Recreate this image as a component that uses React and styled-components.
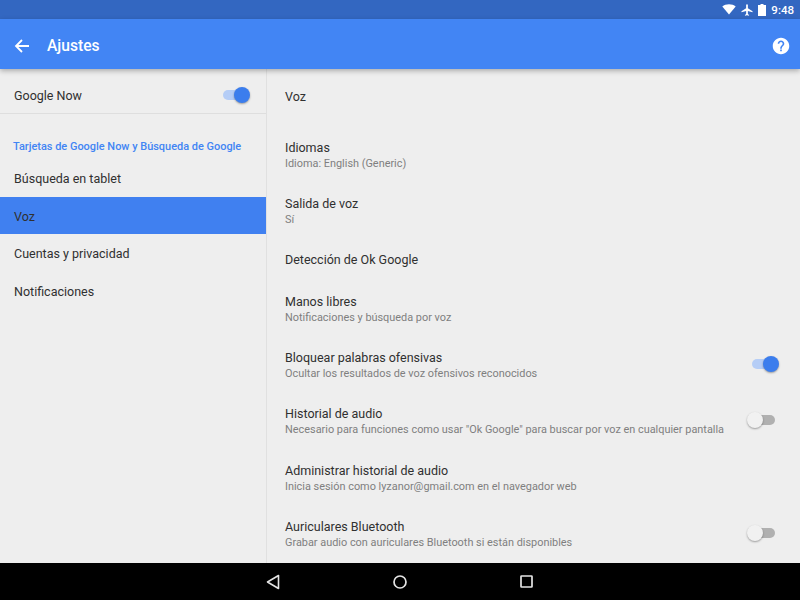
import React from 'react';
import styled, { createGlobalStyle } from 'styled-components';

const GlobalStyle = createGlobalStyle`
  html, body { margin: 0; padding: 0; height: 100%; }
  body { font-family: Roboto, "Liberation Sans", sans-serif; background: #eeeeee; overflow: hidden; }
`;

const Screen = styled.div`
  width: 800px;
  height: 600px;
  display: flex;
  flex-direction: column;
  background: #eeeeee;
`;

const StatusBar = styled.div`
  height: 19px;
  flex: none;
  background: #3367c1;
  display: flex;
  align-items: center;
  justify-content: flex-end;
  padding-right: 6px;
  gap: 4px;
  color: #fff;
`;

const Clock = styled.span`
  font-size: 11.5px;
  font-weight: 500;
  margin-left: 1px;
`;

const AppBar = styled.header`
  height: 50px;
  box-sizing: border-box;
  flex: none;
  background: #4285f4;
  display: flex;
  align-items: center;
  padding: 3px 10px 0 14px;
  color: #fff;
  box-shadow: 0 2px 5px rgba(0, 0, 0, 0.28);
  position: relative;
  z-index: 2;
`;

const BarTitle = styled.h1`
  margin: 0 0 0 17px;
  flex: 1;
  font-size: 15.6px;
  font-weight: 500;
`;

const Body = styled.div`
  flex: 1;
  display: flex;
  min-height: 0;
`;

const Sidebar = styled.nav`
  width: 266px;
  flex: none;
  border-right: 1px solid #e0e0e0;
`;

const MasterRow = styled.div`
  height: 45px;
  box-sizing: border-box;
  border-bottom: 1px solid #dedede;
  display: flex;
  align-items: center;
  justify-content: space-between;
  padding: 8px 20px 0 14px;
  font-size: 12.5px;
  color: #303030;
`;

const SectionHead = styled.div`
  font-size: 10.95px;
  font-weight: 500;
  line-height: 13px;
  color: #4285f4;
  padding: 26px 0 6.2px 13px;
`;

const NavItem = styled.div`
  height: 37.5px;
  box-sizing: border-box;
  display: flex;
  align-items: center;
  padding: 2px 0 0 14px;
  font-size: 12.5px;
  color: #303030;
  background: ${p => (p.$active ? '#4080f0' : 'transparent')};
`;

const Content = styled.main`
  flex: 1;
  min-width: 0;
`;

const PageName = styled.div`
  height: 58px;
  box-sizing: border-box;
  display: flex;
  align-items: center;
  padding: 0 0 4px 18px;
  font-size: 12.5px;
  color: #303030;
`;

const Setting = styled.div`
  height: ${p => (p.$single ? '41.75px' : '56.25px')};
  box-sizing: border-box;
  display: flex;
  align-items: center;
  justify-content: space-between;
  padding: 0 25px ${p => (p.$single ? '1.5px' : '0')} 18px;
`;

const SettingText = styled.div`
  display: flex;
  flex-direction: column;
  gap: 2px;
`;

const SettingTitle = styled.div`
  font-size: 12.5px;
  line-height: 15px;
  color: #303030;
`;

const SettingSub = styled.div`
  font-size: 10.9px;
  line-height: 14px;
  color: #7f7f7f;
`;

const SettingToggle = styled.div`
  margin-bottom: 3px;
`;

const Track = styled.div`
  position: relative;
  width: 23px;
  height: 10px;
  border-radius: 5px;
  background: ${p => (p.$on ? '#b5cdf6' : '#b0b0b0')};
`;

const Knob = styled.div`
  position: absolute;
  top: -3px;
  ${p => (p.$on ? 'right: -4px;' : 'left: -5px;')}
  width: 16px;
  height: 16px;
  border-radius: 50%;
  background: ${p => (p.$on ? '#3b7ded' : '#f1f1f1')};
  box-shadow: 0 1px 2px rgba(0, 0, 0, 0.35);
`;

const NavBar = styled.footer`
  height: 37px;
  flex: none;
  background: #000;
  display: flex;
  align-items: center;
  justify-content: center;
  gap: 113px;
  padding-right: 1px;
`;

function Toggle({ on }) {
  return (
    <Track $on={on}>
      <Knob $on={on} />
    </Track>
  );
}

const settings = [
  { title: 'Idiomas', sub: 'Idioma: English (Generic)' },
  { title: 'Salida de voz', sub: 'Sí' },
  { title: 'Detección de Ok Google' },
  { title: 'Manos libres', sub: 'Notificaciones y búsqueda por voz' },
  { title: 'Bloquear palabras ofensivas', sub: 'Ocultar los resultados de voz ofensivos reconocidos', toggle: true },
  { title: 'Historial de audio', sub: 'Necesario para funciones como usar "Ok Google" para buscar por voz en cualquier pantalla', toggle: false },
  { title: 'Administrar historial de audio', sub: 'Inicia sesión como lyzanor@gmail.com en el navegador web' },
  { title: 'Auriculares Bluetooth', sub: 'Grabar audio con auriculares Bluetooth si están disponibles', toggle: false },
];

const sideItems = ['Búsqueda en tablet', 'Voz', 'Cuentas y privacidad', 'Notificaciones'];

export default function App() {
  return (
    <Screen>
      <GlobalStyle />
      <StatusBar>
        <svg width="14" height="11" viewBox="0 0 14 11">
          <path d="M7 10.500 0.300 2.600C2 1.100 4.400 0.300 7 0.300s5 .8 6.700 2.300z" fill="#fff" />
        </svg>
        <svg width="14" height="14" viewBox="0 0 24 24">
          <path d="M21 16v-2l-8-5V3.500C13 2.670 12.330 2 11.500 2S10 2.670 10 3.500V9l-8 5v2l8-2.500V19l-2 1.500V22l3.500-1 3.500 1v-1.500L13 19v-5.500z" fill="#fff" transform="translate(0.500 0)" />
        </svg>
        <svg width="8" height="12" viewBox="0 0 8 12">
          <path d="M2.500 0h3v1H8v11H0V1h2.500z" fill="#fff" />
        </svg>
        <Clock>9:48</Clock>
      </StatusBar>
      <AppBar>
        <svg width="16" height="16" viewBox="0 0 16 16" fill="none" stroke="#fff" strokeWidth="1.800">
          <path d="M15 8H2M8 2 2 8l6 6" />
        </svg>
        <BarTitle>Ajustes</BarTitle>
        <svg width="18" height="18" viewBox="0 0 24 24">
          <path fill="#fff" d="M12 1C5.930 1 1 5.930 1 12s4.930 11 11 11 11-4.930 11-11S18.070 1 12 1zm1.100 18h-2.200v-2.200h2.200V19zm2.280-7.600-.99 1.010c-.8.800-1.290 1.450-1.290 3.090h-2.200v-.55c0-1.210.49-2.310 1.290-3.110l1.360-1.380c.41-.4.650-.95.650-1.560 0-1.210-.99-2.200-2.200-2.200-1.210 0-2.200.99-2.200 2.200H7.600c0-2.430 1.970-4.400 4.400-4.400s4.400 1.970 4.400 4.400c0 .97-.39 1.850-1.020 2.500z" />
        </svg>
      </AppBar>
      <Body>
        <Sidebar>
          <MasterRow>
            Google Now
            <Toggle on />
          </MasterRow>
          <SectionHead>Tarjetas de Google Now y Búsqueda de Google</SectionHead>
          {sideItems.map(item => (
            <NavItem key={item} $active={item === 'Voz'}>{item}</NavItem>
          ))}
        </Sidebar>
        <Content>
          <PageName>Voz</PageName>
          {settings.map(s => (
            <Setting key={s.title} $single={!s.sub}>
              <SettingText>
                <SettingTitle>{s.title}</SettingTitle>
                {s.sub && <SettingSub>{s.sub}</SettingSub>}
              </SettingText>
              {s.toggle !== undefined && (
                <SettingToggle>
                  <Toggle on={s.toggle} />
                </SettingToggle>
              )}
            </Setting>
          ))}
        </Content>
      </Body>
      <NavBar>
        <svg width="14" height="16" viewBox="0 0 14 16" fill="none" stroke="#e4e4e4" strokeWidth="1.600">
          <path d="M12.500 1.500v13L1.500 8z" strokeLinejoin="round" />
        </svg>
        <svg width="14" height="14" viewBox="0 0 14 14" fill="none" stroke="#e4e4e4" strokeWidth="1.700">
          <circle cx="7" cy="7" r="6" />
        </svg>
        <svg width="13" height="13" viewBox="0 0 13 13" fill="none" stroke="#e4e4e4" strokeWidth="1.700">
          <rect x="1" y="1" width="11" height="11" rx="0.500" />
        </svg>
      </NavBar>
    </Screen>
  );
}
